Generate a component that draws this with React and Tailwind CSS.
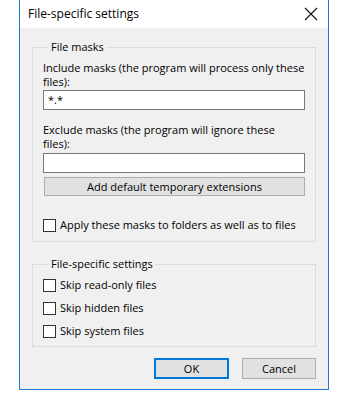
import React from "react";

const Check = ({ label }) => (
  <label className="flex items-center h-[16px] whitespace-nowrap">
    <span className="w-[13px] h-[13px] border border-[#333333] bg-white shrink-0" />
    <span className="ml-[4px]">{label}</span>
  </label>
);

const App = () => {
  return (
    <div className="w-[352px] h-[401px] bg-white text-[11px] text-black font-['Open_Sans',sans-serif] leading-[16px]">
      <div className="ml-[19px] w-[310px] h-[390px] border-x border-b border-[#1c7ad6] bg-[#f0f0f0] flex flex-col">
        {/* title bar */}
        <div className="h-[28px] bg-white flex items-center justify-between pl-[8px] pr-[10px] text-[12px]">
          <span>File-specific settings</span>
          <svg width="14" height="14" viewBox="0 0 14 14" className="mb-[1px]">
            <path d="M1 1 L13 13 M13 1 L1 13" stroke="#111" strokeWidth="1.1" fill="none" />
          </svg>
        </div>

        <div className="px-[12px] flex flex-col">
          <fieldset className="mt-[11px] min-w-0 border border-[#dcdcdc] h-[203px] pl-[10px] pr-[10px]">
            <legend className="ml-[6px] px-[2px]">File masks</legend>
            <div className="leading-[13.5px] mt-[6px] whitespace-nowrap">
              Include masks (the program will process only these
              <br />
              files):
            </div>
            <div className="mt-[2px] h-[20px] border border-[#7a7a7a] bg-white pl-[4px] flex items-center">
              *.*
            </div>
            <div className="leading-[13.5px] mt-[13px] whitespace-nowrap">
              Exclude masks (the program will ignore these
              <br />
              files):
            </div>
            <div className="mt-[3px] h-[20px] border border-[#7a7a7a] bg-white" />
            <button className="mt-[4px] mx-[1px] h-[19px] border border-[#adadad] bg-[#e1e1e1] flex items-center justify-center w-[261px]">
              Add default temporary extensions
            </button>
            <div className="mt-[21px]">
              <Check label="Apply these masks to folders as well as to files" />
            </div>
          </fieldset>

          <fieldset className="mt-[14px] min-w-0 border border-[#dcdcdc] h-[91px] pl-[10px] pr-[10px]">
            <legend className="ml-[6px] px-[2px]">File-specific settings</legend>
            <div className="flex flex-col gap-[7px] mt-[5px]">
              <Check label="Skip read-only files" />
              <Check label="Skip hidden files" />
              <Check label="Skip system files" />
            </div>
          </fieldset>

          <div className="flex justify-end gap-[13px] mt-[11px]">
            <button className="w-[75px] h-[21px] border-2 border-[#0078d7] bg-[#e1e1e1] flex items-center justify-center">
              OK
            </button>
            <button className="w-[74px] h-[21px] border border-[#adadad] bg-[#e1e1e1] flex items-center justify-center">
              Cancel
            </button>
          </div>
        </div>
      </div>
    </div>
  );
};

export default App;
